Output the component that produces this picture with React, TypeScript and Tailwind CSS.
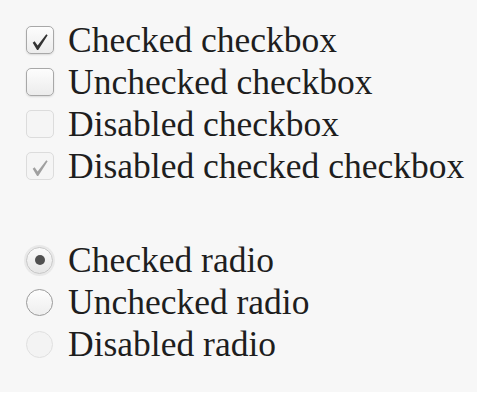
import { useState } from 'react';

type BoxProps = { checked?: boolean; disabled?: boolean };

// Tapered tick: thin short arm on the left, heavier long stroke to the right
function CheckMark({ color }: { color: string }) {
  return (
    <svg viewBox="0 0 16 16" className="w-[18px] h-[18px] mt-[3px]">
      <path d="M1.5 8.6 L3.2 7.4 L5.9 11.2 L13.6 1.2 L14.8 2 L6.4 15 L5.4 15 Z" fill={color} />
    </svg>
  );
}

function Box({ checked, disabled }: BoxProps) {
  return (
    <span
      className={
        disabled
          ? 'w-[28px] h-[28px] flex items-center justify-center rounded-[5px] border border-[#dcdcdc] bg-[#f5f5f5]'
          : 'w-[28px] h-[28px] flex items-center justify-center rounded-[5px] border border-[#a8a8a8] bg-gradient-to-b from-[#fdfdfd] to-[#ececec] shadow-[0_1px_2px_rgba(0,0,0,0.12)]'
      }
    >
      {checked && <CheckMark color={disabled ? '#a0a0a0' : '#333'} />}
    </span>
  );
}

function Radio({ checked, disabled }: BoxProps) {
  return (
    <span
      className={
        disabled
          ? 'w-[27px] h-[27px] flex items-center justify-center rounded-full border border-[#e0e0e0] bg-[#f3f3f3]'
          : checked
            ? 'w-[27px] h-[27px] flex items-center justify-center rounded-full border border-[#c4c4c4] bg-gradient-to-b from-[#fbfbfb] to-[#e6e6e6] shadow-[0_0_0_2px_rgba(0,0,0,0.06)]'
            : 'w-[27px] h-[27px] flex items-center justify-center rounded-full border border-[#9a9a9a] bg-gradient-to-b from-[#fdfdfd] to-[#eeeeee]'
      }
    >
      {checked && <span className="w-[10px] h-[10px] rounded-full bg-[#505050]" />}
    </span>
  );
}

export default function App() {
  const [boxes] = useState([
    { label: 'Checked checkbox', checked: true, disabled: false },
    { label: 'Unchecked checkbox', checked: false, disabled: false },
    { label: 'Disabled checkbox', checked: false, disabled: true },
    { label: 'Disabled checked checkbox', checked: true, disabled: true },
  ]);
  const radios = [
    { label: 'Checked radio', checked: true, disabled: false },
    { label: 'Unchecked radio', checked: false, disabled: false },
    { label: 'Disabled radio', checked: false, disabled: true },
  ];

  return (
    <div className="w-[492px] h-[402px] bg-white">
      <div
        className="w-[477px] h-[392px] bg-[#f7f7f7] pt-[19px] pl-[26px] text-[#1e1e1e] text-[35.5px] leading-[42px]"
        style={{ fontFamily: '"Liberation Serif", "Times New Roman", serif' }}
      >
        <div className="flex flex-col">
          {boxes.map((b) => (
            <label key={b.label} className="flex items-center gap-[14px] h-[42px]">
              <Box checked={b.checked} disabled={b.disabled} />
              <span>{b.label}</span>
            </label>
          ))}
        </div>
        <div className="flex flex-col mt-[52px]">
          {radios.map((r) => (
            <label key={r.label} className="flex items-center gap-[15px] h-[42px]">
              <Radio checked={r.checked} disabled={r.disabled} />
              <span>{r.label}</span>
            </label>
          ))}
        </div>
      </div>
    </div>
  );
}
